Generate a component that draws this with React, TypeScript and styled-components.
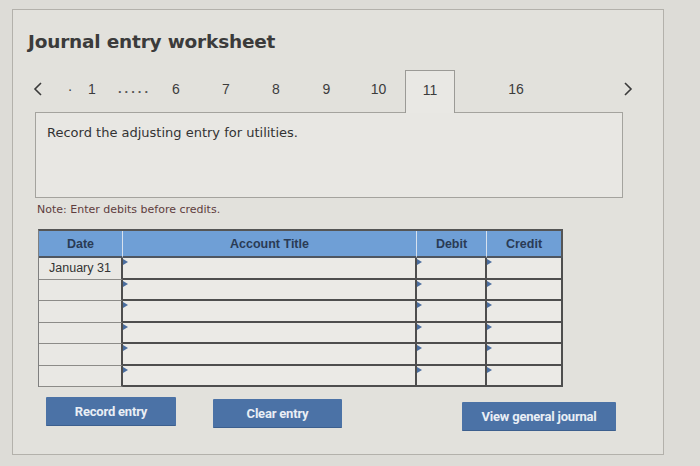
import React from "react";
import styled, { createGlobalStyle } from "styled-components";

const Global = createGlobalStyle`
  html, body { margin: 0; padding: 0; }
  body {
    background: #dddcd7;
    width: 700px;
    height: 466px;
    overflow: hidden;
    font-family: "DejaVu Sans", Verdana, sans-serif;
  }
`;

const Page = styled.div`
  padding: 9px 0 0 12px;
  box-sizing: border-box;
  width: 700px;
  height: 466px;
`;

const Panel = styled.div`
  width: 652px;
  height: 446px;
  box-sizing: border-box;
  background: #e2e1dc;
  border: 1px solid #b3b1ab;
  display: flex;
  flex-direction: column;
`;

const Title = styled.h1`
  margin: 20px 0 0 15px;
  font-family: "DejaVu Sans", Verdana, sans-serif;
  font-weight: bold;
  font-size: 18.5px;
  letter-spacing: -0.2px;
  color: #3b3b3b;
  line-height: 24px;
`;

const TabRow = styled.div`
  margin-top: 16px;
  height: 42px;
  display: flex;
  align-items: stretch;
  padding-left: 9px;
  padding-right: 25px;
  position: relative;
  z-index: 1;
`;

const Tab = styled.div<{ $w: number; $active?: boolean; $align?: string }>`
  width: ${(p) => p.$w}px;
  flex: none;
  box-sizing: border-box;
  display: flex;
  align-items: center;
  justify-content: ${(p) => p.$align || "center"};
  font-family: "Liberation Sans", Arial, sans-serif;
  font-size: 14px;
  color: #3c3c3c;
  padding-bottom: 5px;
  ${(p) =>
    p.$active
      ? `background: #e9e8e4; border: 1px solid #9b9a96; border-bottom: none; margin-bottom: -1px;`
      : ``}
`;

const Dots = styled.span`
  letter-spacing: 3px;
  font-weight: bold;
  color: #555;
  font-size: 13px;
`;

const Arrow = styled.span`
  display: flex;
`;

const Spacer = styled.div`
  flex: 1;
`;

const Prompt = styled.div`
  margin-left: 22px;
  width: 588px;
  height: 86px;
  box-sizing: border-box;
  background: #e8e7e3;
  border: 1px solid #a4a39e;
  padding: 12px 0 0 11px;
  font-family: "DejaVu Sans", Verdana, sans-serif;
  font-size: 13px;
  color: #333;
`;

const Note = styled.div`
  margin: 5px 0 0 24px;
  font-family: "DejaVu Sans", Verdana, sans-serif;
  font-size: 11px;
  line-height: 14px;
  color: #5e3d3d;
`;

const Table = styled.div`
  margin: 12px 0 0 25px;
  display: grid;
  grid-template-columns: 84px 294px 70px 76px;
  grid-template-rows: 27px repeat(6, 21.5px);
  width: 524px;
  border-top: 2px solid #555;
  border-left: 1px solid #7f7f7f;
  box-sizing: content-box;
`;

const Head = styled.div<{ $last?: boolean }>`
  background: #6f9fd6;
  border-right: ${(p) => (p.$last ? "2px solid #555" : "1px solid #d7e1ee")};
  border-bottom: 2px solid #4f5660;
  display: flex;
  align-items: center;
  justify-content: center;
  font-family: "Liberation Sans", Arial, sans-serif;
  font-weight: bold;
  font-size: 12.5px;
  color: #2a3b55;
`;

const DateCell = styled.div`
  background: #e9e8e4;
  border-bottom: 1px solid #8c8b88;
  border-right: 2px solid #4e4e4e;
  display: flex;
  align-items: center;
  justify-content: center;
  font-family: "Liberation Sans", Arial, sans-serif;
  font-size: 12.5px;
  color: #333;
`;

const InputCell = styled.div`
  position: relative;
  background: #ebeae6;
  border-bottom: 2px solid #4e4e4e;
  border-right: 2px solid #4e4e4e;
  &::before {
    content: "";
    position: absolute;
    top: 1px;
    left: 0;
    border-left: 5px solid #4a6d9e;
    border-top: 3px solid transparent;
    border-bottom: 3px solid transparent;
  }
`;

const Buttons = styled.div`
  margin: 10px 0 0 33px;
  display: flex;
  align-items: flex-start;
`;

const Button = styled.button<{ $w: number; $ml?: number; $mt?: number }>`
  width: ${(p) => p.$w}px;
  height: 29px;
  margin-left: ${(p) => p.$ml || 0}px;
  margin-top: ${(p) => p.$mt || 0}px;
  background: #4b72a6;
  border: none;
  border-bottom: 1px solid #3c5f8e;
  border-radius: 1px;
  color: #e9eef5;
  font-family: "Roboto", "Liberation Sans", sans-serif;
  font-weight: bold;
  font-size: 13px;
  letter-spacing: -0.2px;
  cursor: pointer;
`;

const rows = ["January 31", "", "", "", "", ""];

export default function App() {
  return (
    <>
      <Global />
      <Page>
        <Panel>
          <Title>Journal entry worksheet</Title>
          <TabRow>
            <Tab $w={32}>
              <Arrow>
                <svg width="10" height="16" viewBox="0 0 10 16">
                  <path d="M8 2 L2 8 L8 14" fill="none" stroke="#3a3a3a" strokeWidth="1.6" />
                </svg>
              </Arrow>
            </Tab>
            <Tab $w={32}>·</Tab>
            <Tab $w={12}>1</Tab>
            <Tab $w={53} $align="flex-end">
              <Dots>.....</Dots>
            </Tab>
            <Tab $w={50}>6</Tab>
            <Tab $w={50}>7</Tab>
            <Tab $w={50}>8</Tab>
            <Tab $w={51}>9</Tab>
            <Tab $w={53}>10</Tab>
            <Tab $w={50} $active>
              11
            </Tab>
            <Tab $w={122}>16</Tab>
            <Spacer />
            <Tab $w={20}>
              <Arrow>
                <svg width="10" height="16" viewBox="0 0 10 16">
                  <path d="M2 2 L8 8 L2 14" fill="none" stroke="#3a3a3a" strokeWidth="1.6" />
                </svg>
              </Arrow>
            </Tab>
          </TabRow>
          <Prompt>Record the adjusting entry for utilities.</Prompt>
          <Note>Note: Enter debits before credits.</Note>
          <Table>
            <Head>Date</Head>
            <Head>Account Title</Head>
            <Head>Debit</Head>
            <Head $last>Credit</Head>
            {rows.map((d, i) => (
              <React.Fragment key={i}>
                <DateCell>{d}</DateCell>
                <InputCell />
                <InputCell />
                <InputCell />
              </React.Fragment>
            ))}
          </Table>
          <Buttons>
            <Button $w={130}>Record entry</Button>
            <Button $w={129} $ml={37} $mt={2}>
              Clear entry
            </Button>
            <Button $w={154} $ml={120} $mt={5}>
              View general journal
            </Button>
          </Buttons>
        </Panel>
      </Page>
    </>
  );
}
